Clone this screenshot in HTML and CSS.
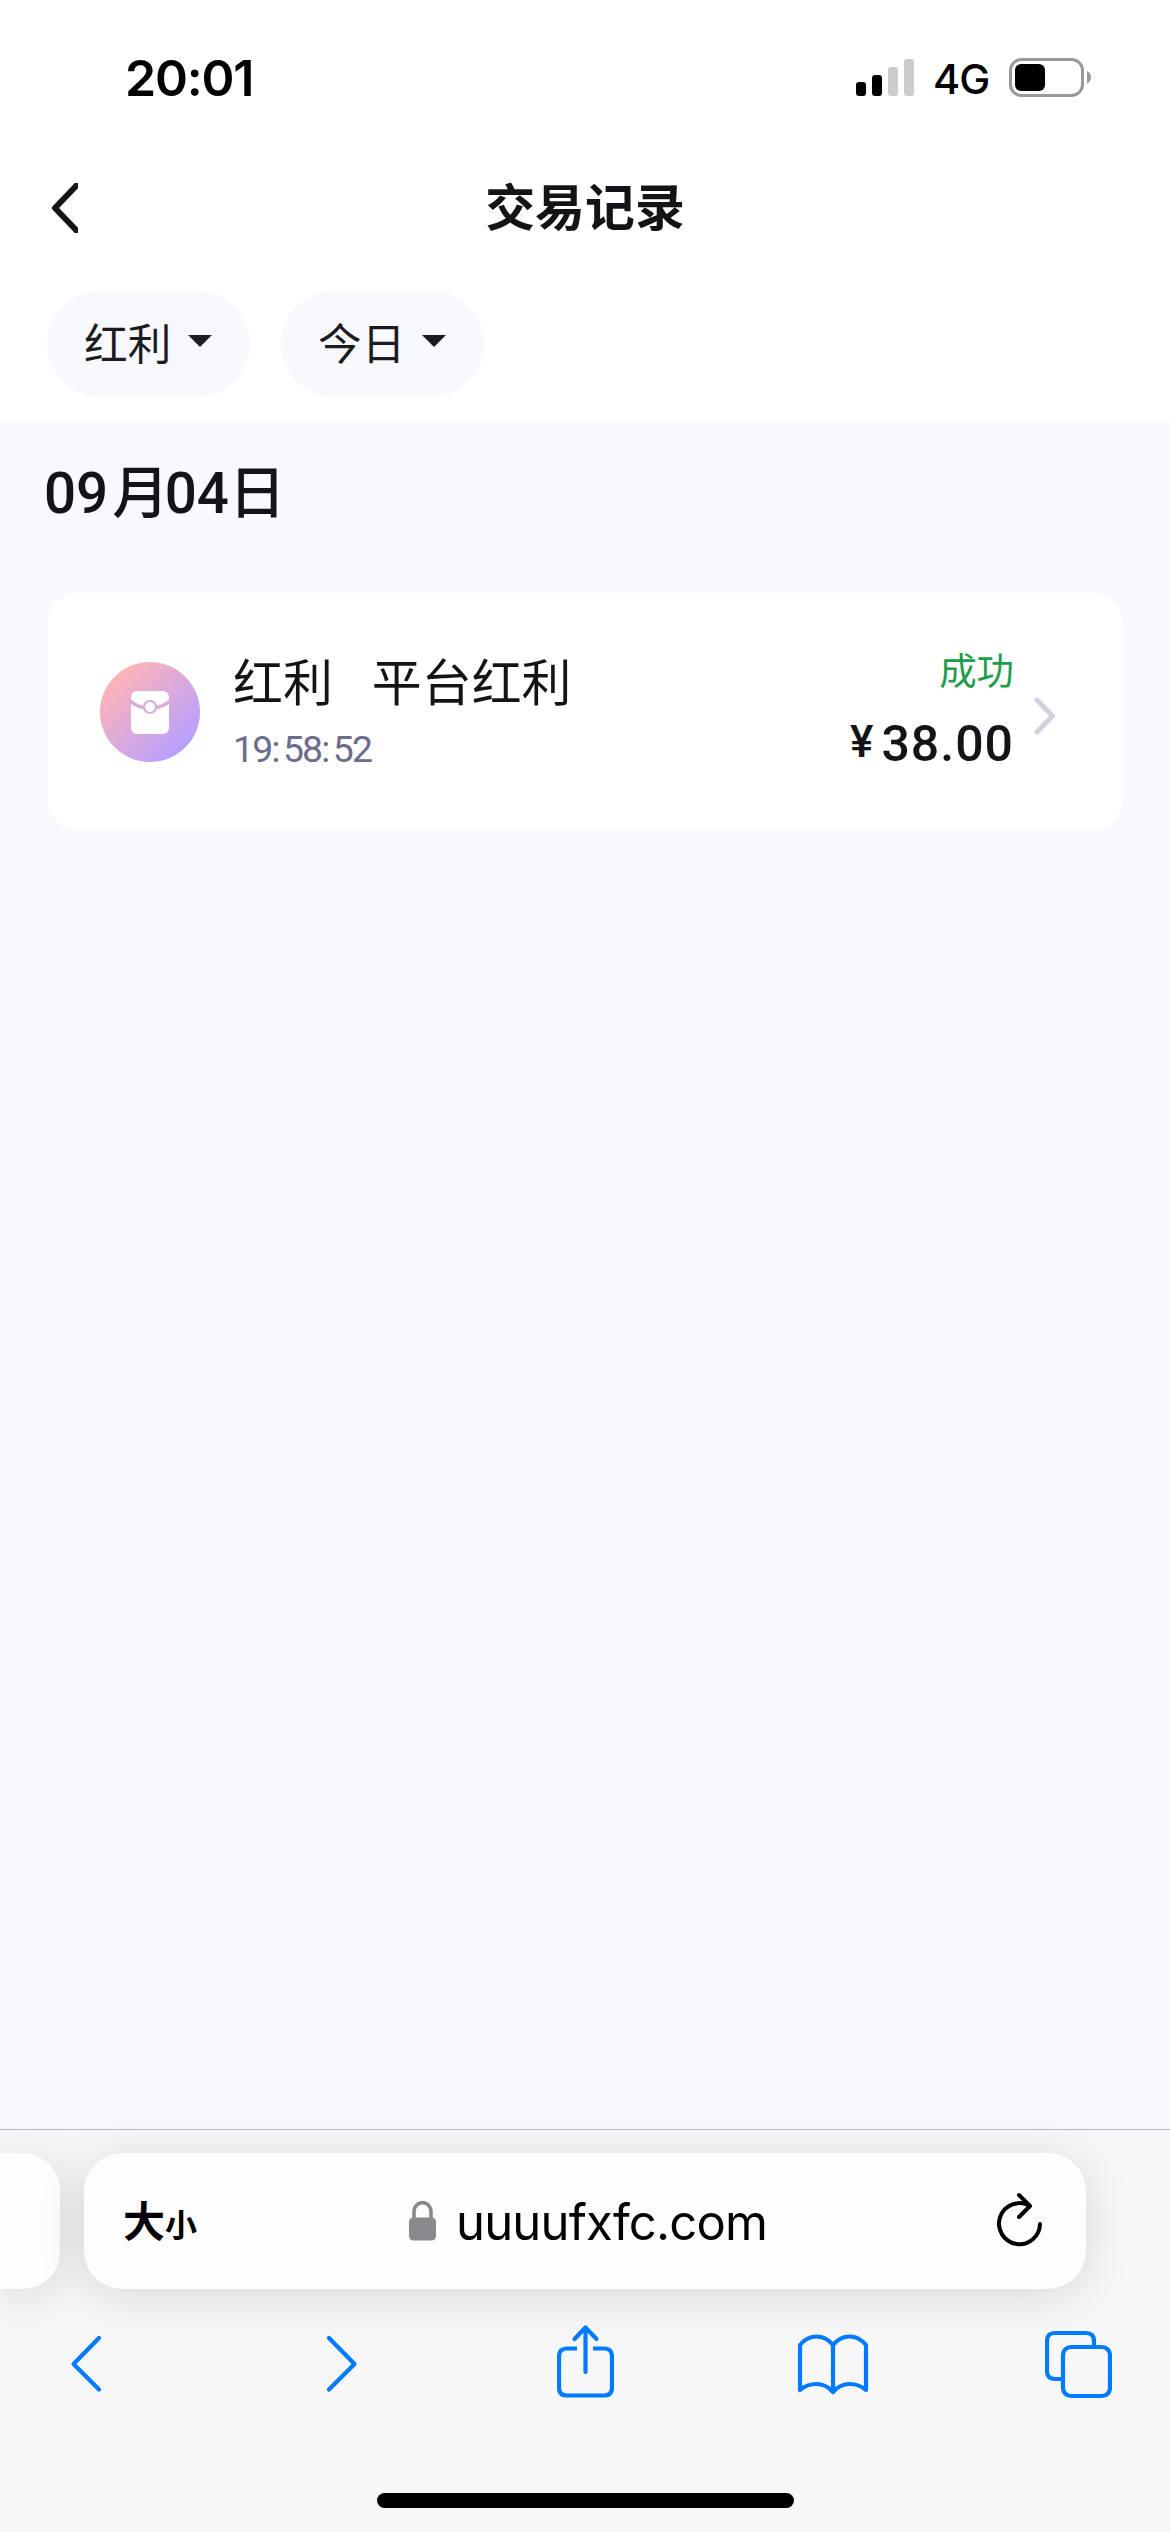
FILE: index.html
```html
<!DOCTYPE html>
<html lang="zh-CN">
<head>
<meta charset="utf-8">
<title>交易记录</title>
<link rel="stylesheet" href="styles.css">
</head>
<body>
<header class="top">
  <div class="status">
    <span class="clock">20:01</span>
    <div class="indicators">
      <svg class="signal" width="58" height="38" viewBox="0 0 58 38">
        <rect x="0" y="23" width="10" height="14" rx="3"/>
        <rect x="16" y="16" width="10" height="21" rx="3"/>
        <rect x="32" y="8" width="10" height="29" rx="3" fill="#ccc"/>
        <rect x="48" y="0" width="10" height="37" rx="3" fill="#ccc"/>
      </svg>
      <span class="network">4G</span>
      <svg class="battery" width="83" height="39" viewBox="0 0 83 39">
        <rect x="1.5" y="1.5" width="72" height="36" rx="11" fill="none" stroke="#999" stroke-width="3"/>
        <rect x="6" y="6" width="30" height="27" rx="6"/>
        <path d="M78 13Q82 15 82 19T78 26Z" fill="#999"/>
      </svg>
    </div>
  </div>
  <nav class="navbar">
    <svg class="back" width="27" height="50" viewBox="0 0 27 50">
      <path d="M25.500 2.500L4 25L25.500 47.500" fill="none" stroke="#141418" stroke-width="6" stroke-linecap="round" stroke-linejoin="round"/>
    </svg>
    <h1 class="title">交易记录</h1>
  </nav>
  <div class="filters">
    <button class="filter"><span>红利</span><svg width="24" height="12" viewBox="0 0 24 12"><path d="M0 0H24L12 12Z" fill="#1c1c20"/></svg></button>
    <button class="filter"><span>今日</span><svg width="24" height="12" viewBox="0 0 24 12"><path d="M0 0H24L12 12Z" fill="#1c1c20"/></svg></button>
  </div>
</header>
<main class="content">
  <h2 class="date">09<span class="month">月</span>04日</h2>
  <section class="record">
    <svg class="record-icon" width="100" height="100" viewBox="0 0 100 100">
      <defs>
        <linearGradient id="badge" x1="0.15" y1="0.15" x2="0.85" y2="0.85">
          <stop offset="0" stop-color="#ffb3b8"/>
          <stop offset="1" stop-color="#b6a0ff"/>
        </linearGradient>
      </defs>
      <circle cx="50" cy="50" r="50" fill="url(#badge)"/>
      <rect x="31" y="29" width="38" height="43" rx="6" fill="#fff"/>
      <path d="M30 39Q37 44.500 44 45.500M70 39Q63 44.500 56 45.500" fill="none" stroke="#d8aed5" stroke-width="3.500"/>
      <circle cx="50" cy="45" r="6" fill="#fff" stroke="#d8aed5" stroke-width="2.200"/>
    </svg>
    <div class="record-info">
      <div class="record-name"><span>红利</span><span>平台红利</span></div>
      <div class="record-time">19<i>:</i>58<i>:</i>52</div>
    </div>
    <div class="record-result">
      <div class="record-status">成功</div>
      <div class="record-amount"><span class="currency">¥</span>38.00</div>
    </div>
    <svg class="record-arrow" width="22" height="38" viewBox="0 0 22 38">
      <path d="M3 3L18.500 19L3 35" fill="none" stroke="#d1d1de" stroke-width="4.800" stroke-linecap="round" stroke-linejoin="round"/>
    </svg>
  </section>
</main>
<footer class="browser">
  <div class="tabs">
    <div class="tab-previous"></div>
    <div class="address">
      <div class="text-size"><span>大</span><span class="small">小</span></div>
      <div class="site">
        <svg width="27" height="40" viewBox="0 0 27 40">
          <path d="M5 19V11C5 -1.500 22 -1.500 22 11V19" fill="none" stroke="#8a8a8e" stroke-width="3.600"/>
          <rect x="0" y="16.500" width="27" height="23" rx="4.500" fill="#8a8a8e"/>
        </svg>
        <span class="url">uuuufxfc.com</span>
      </div>
      <svg class="reload" width="46" height="56" viewBox="0 0 46 56">
        <path d="M43 32A20.500 20.500 0 1 1 32 13.500M22 3L33 14L22 25" fill="none" stroke="#000" stroke-width="4" stroke-linecap="round" stroke-linejoin="round"/>
      </svg>
    </div>
  </div>
  <div class="toolbar">
    <svg class="tool-back" width="32" height="76" viewBox="0 0 32 76"><path d="M29 14L3.500 40L29 65.500"/></svg>
    <svg class="tool-forward" width="32" height="76" viewBox="0 0 32 76"><path d="M3 14L28.500 40L3 65.500"/></svg>
    <svg class="tool-share" width="57" height="76" viewBox="0 0 57 76">
      <path d="M20 24.500H10Q2 24.500 2 32.500V63.500Q2 71.500 10 71.500H47Q55 71.500 55 63.500V32.500Q55 24.500 47 24.500H36" stroke-linecap="butt"/>
      <path d="M28.500 48V3.500M17.500 15L28.500 3.500L39.500 15"/>
    </svg>
    <svg class="tool-books" width="72" height="76" viewBox="0 0 72 76">
      <path d="M36 68Q29 60 19.500 60T3 66V21Q10 12.500 19.500 12.500T36 21Q43 12.500 52.500 12.500T69 21V66Q62 60 52.500 60T36 68V21"/>
    </svg>
    <svg class="tool-tabs" width="67" height="76" viewBox="0 0 67 76">
      <path d="M16 55H10Q2 55 2 47V17Q2 9 10 9H41Q49 9 49 17V23" stroke-linecap="butt"/>
      <rect x="18" y="23" width="47" height="49" rx="8"/>
    </svg>
  </div>
  <div class="home-indicator"></div>
</footer>
</body>
</html>
```
FILE: styles.css
```css
* { box-sizing: border-box; }

body {
  margin: 0;
  width: 1170px;
  height: 2532px;
  display: flex;
  flex-direction: column;
  overflow: hidden;
  background: #f8f9ff;
  color: #141418;
  font-family: "Noto Sans CJK SC", sans-serif;
}

svg { display: block; flex: none; }

/* Header */
.top { height: 422px; background: #fff; }

.status {
  height: 156px;
  padding: 0 78px 0 125px;
  display: flex;
  justify-content: space-between;
  color: #000;
}

.clock {
  margin-top: 48px;
  height: 60px;
  font: 600 50px/60px Inter, sans-serif;
  letter-spacing: -1.2px;
}

.indicators { display: flex; align-items: flex-start; }
.signal { margin: 59px 18px 0 0; }
.network {
  width: 77px;
  margin-top: 54px;
  padding-left: 1px;
  font: 500 41.5px/50px Inter, sans-serif;
  letter-spacing: -1px;
}
.battery { margin-top: 58px; }

.navbar {
  height: 104px;
  padding: 0 51px;
  display: grid;
  grid-template-columns: 27px 1fr 27px;
  align-items: center;
}
.title {
  margin: 0 0 8px;
  text-align: center;
  font-size: 49.92px;
  line-height: 70px;
  font-weight: 600;
}

.filters {
  display: flex;
  gap: 31px;
  padding: 31px 47px 0;
}
.filter {
  width: 203px;
  height: 106px;
  padding: 0 38px 0 37px;
  display: flex;
  align-items: center;
  justify-content: space-between;
  border: 0;
  border-radius: 53px;
  background: #f8f9ff;
  color: #1c1c20;
  font: 400 43.68px/60px "Noto Sans CJK SC", sans-serif;
}
.filter span { margin-bottom: 6px; }
.filter svg { margin-bottom: 6px; }

/* Records */
.content { flex: 1; padding: 0 47px; }

.date {
  margin: 0 0 0 -3px;
  height: 171px;
  padding-top: 32px;
  font: 500 56.5px/80px Roboto, "Noto Sans CJK SC", sans-serif;
}
.month { margin: 0 -4px 0 4px; }

.record {
  height: 237px;
  padding: 0 67px 0 53px;
  display: flex;
  border-radius: 31px;
  background: #fff;
}
.record-icon { margin: 69px 33px 0 0; }
.record-info { flex: 1; padding-top: 51px; }
.record-name {
  display: flex;
  gap: 39px;
  font-size: 49.92px;
  line-height: 70px;
}
.record-time {
  margin-top: 12px;
  color: #6c6c8b;
  font: 400 37.4px/46px Roboto, sans-serif;
  letter-spacing: -1.8px;
}
.record-time i { font-style: normal; letter-spacing: 2.4px; }
.record-result { padding-top: 49px; text-align: right; }
.record-status {
  color: #1f9d4d;
  font-size: 37.44px;
  line-height: 54px;
}
.record-amount {
  margin-top: 18px;
  font: 500 50px/60px Roboto, sans-serif;
  letter-spacing: 1px;
}
.currency { margin-right: 7px; font-size: 44px; vertical-align: 4px; line-height: 1; }
.record-arrow { margin: 104px 0 0 20px; }

/* Browser chrome */
.browser {
  height: 403px;
  border-top: 1px solid #b9b9bf;
  background: #f7f7f7;
}
.tabs { display: flex; gap: 24px; padding-top: 23px; }
.tab-previous, .address {
  height: 136px;
  background: #fdfdfd;
  box-shadow: 0 6px 48px rgba(0, 0, 0, 0.13);
}
.tab-previous { width: 60px; border-radius: 0 37px 37px 0; }
.address {
  width: 1002px;
  padding: 0 43px 0 39px;
  display: grid;
  grid-template-columns: 100px 1fr 46px;
  align-items: center;
  border-radius: 38px;
  color: #000;
}
.text-size {
  display: flex;
  align-items: baseline;
  font-size: 42px;
  line-height: 60px;
  font-weight: 700;
}
.text-size .small { font-size: 32px; }
.site {
  display: flex;
  align-items: center;
  padding-left: 186px;
  gap: 20px;
}
.url {
  padding-top: 3px;
  font: 400 49px/60px Inter, sans-serif;
  letter-spacing: -0.8px;
}
.reload { margin-bottom: 2px; }

.toolbar {
  margin-top: 35px;
  padding-left: 70px;
  display: flex;
}
.toolbar svg {
  fill: none;
  stroke: #007aff;
  stroke-width: 4.2px;
  stroke-linecap: round;
  stroke-linejoin: round;
}
.tool-forward { margin-left: 224px; }
.tool-share { margin-left: 199px; }
.tool-books { margin-left: 183px; }
.tool-tabs { margin-left: 176px; }

.home-indicator {
  width: 417px;
  height: 15px;
  margin: 93px auto 0;
  border-radius: 8px;
  background: #000;
}
```
